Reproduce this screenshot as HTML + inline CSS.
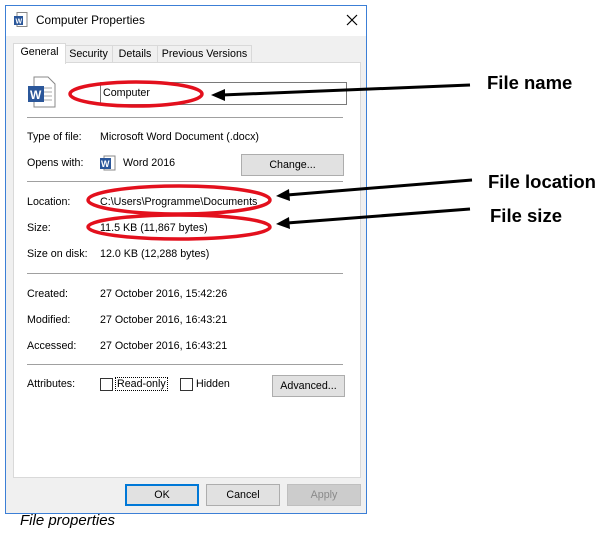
<!DOCTYPE html>
<html><head><style>
body{margin:0;width:614px;height:538px;background:#fff;font-family:"Liberation Sans",sans-serif;font-size:10.7px;color:#000;position:relative;overflow:hidden}
.a{position:absolute;white-space:nowrap}
.win{position:absolute;left:5px;top:5px;width:360px;height:507px;border:1px solid #3c7fd6;background:#f0f0f0}
.title{position:absolute;left:0;top:0;width:360px;height:30px;background:#fff}
.panel{position:absolute;left:7px;top:56px;width:346px;height:414px;background:#fff;border:1px solid #d9d9d9}
.tab{position:absolute;top:39px;height:17px;border:1px solid #d9d9d9;border-bottom:none;background:#f0f0f0;line-height:17px;text-align:center}
.sep{position:absolute;height:1px;background:#a0a0a0}
.btn{position:absolute;height:20px;border:1px solid #adadad;background:#e1e1e1;text-align:center;line-height:20px}
.cb{position:absolute;width:11px;height:11px;border:1px solid #333;background:#fff}
.lbl{font-weight:bold;font-size:18.5px}
</style></head><body>
<div class="win">
 <div class="title"></div>
 <div class="tab" style="left:58px;width:47px">Security</div>
 <div class="tab" style="left:106px;width:44px">Details</div>
 <div class="tab" style="left:151px;width:93px">Previous Versions</div>
 <div class="panel"></div>
 <div class="tab" style="left:7px;top:37px;height:20px;width:51px;background:#fff;z-index:2">General</div>
</div>
<svg class="a" style="left:14px;top:12px" width="14" height="16"><rect x="3" y="0.5" width="10" height="14" fill="#fff" stroke="#888"/><rect x="0" y="4" width="9" height="9" fill="#2b579a"/><text x="1.5" y="11.5" font-size="7" fill="#fff" font-family="Liberation Sans" font-weight="bold">W</text></svg>
<div class="a" style="left:36px;top:13px;font-size:11.8px">Computer Properties</div>
<svg class="a" style="left:346px;top:14px" width="12" height="12"><path d="M1 1L11 11M11 1L1 11" stroke="#000" stroke-width="1.2"/></svg>
<svg class="a" style="left:28px;top:76px" width="28" height="32"><path d="M6 1h14l7 7v23H6z" fill="#fff" stroke="#888"/><path d="M13 12h11M13 16h11M13 20h11M13 24h11" stroke="#aaa"/><rect x="0" y="10" width="16" height="16" fill="#2b579a"/><text x="2" y="23" font-size="12" fill="#fff" font-weight="bold" font-family="Liberation Sans">W</text></svg>
<div class="a" style="left:100px;top:82px;width:245px;height:21px;border:1px solid #7a7a7a;background:#fff"></div>
<div class="a" style="left:103px;top:87px">Computer</div>
<div class="sep" style="top:117px;left:27px;width:316px"></div>
<div class="a" style="left:27px;top:131px">Type of file:</div><div class="a" style="left:100px;top:131px">Microsoft Word Document (.docx)</div>
<div class="a" style="left:27px;top:157px">Opens with:</div>
<svg class="a" style="left:100px;top:155px" width="16" height="16"><rect x="4" y="1" width="11" height="14" fill="#fff" stroke="#888"/><rect x="0" y="3" width="11" height="11" fill="#2b579a"/><text x="1" y="12" font-size="9" fill="#fff" font-weight="bold" font-family="Liberation Sans">W</text></svg>
<div class="a" style="left:123px;top:157px">Word 2016</div>
<div class="btn" style="left:241px;top:154px;width:101px">Change...</div>
<div class="sep" style="top:181px;left:27px;width:316px"></div>
<div class="a" style="left:27px;top:196px">Location:</div><div class="a" style="left:100px;top:196px">C:\Users\Programme\Documents</div>
<div class="a" style="left:27px;top:222px">Size:</div><div class="a" style="left:100px;top:222px">11.5 KB (11,867 bytes)</div>
<div class="a" style="left:27px;top:248px">Size on disk:</div><div class="a" style="left:100px;top:248px">12.0 KB (12,288 bytes)</div>
<div class="sep" style="top:273px;left:27px;width:316px"></div>
<div class="a" style="left:27px;top:288px">Created:</div><div class="a" style="left:100px;top:288px">27 October 2016, 15:42:26</div>
<div class="a" style="left:27px;top:314px">Modified:</div><div class="a" style="left:100px;top:314px">27 October 2016, 16:43:21</div>
<div class="a" style="left:27px;top:340px">Accessed:</div><div class="a" style="left:100px;top:340px">27 October 2016, 16:43:21</div>
<div class="sep" style="top:364px;left:27px;width:316px"></div>
<div class="a" style="left:27px;top:378px">Attributes:</div>
<div class="cb" style="left:100px;top:378px"></div><div class="a" style="left:115px;top:377px;border:1px dotted #000;padding:0 1px">Read-only</div>
<div class="cb" style="left:180px;top:378px"></div><div class="a" style="left:196px;top:378px">Hidden</div>
<div class="btn" style="left:272px;top:375px;width:71px">Advanced...</div>
<div class="btn" style="left:125px;top:484px;width:70px;border:2px solid #0078d7;height:18px;line-height:18px">OK</div>
<div class="btn" style="left:206px;top:484px;width:72px">Cancel</div>
<div class="btn" style="left:287px;top:484px;width:72px;background:#ccc;border-color:#bfbfbf;color:#8a8a8a">Apply</div>
<div class="a" style="left:20px;top:512px;font-size:15px;font-style:italic">File properties</div>
<svg class="a" style="left:0;top:0" width="614" height="538">
<g fill="none" stroke="#e3101d" stroke-width="3.5">
<ellipse cx="136" cy="94" rx="66" ry="12"/>
<ellipse cx="179" cy="200" rx="91" ry="14"/>
<ellipse cx="179" cy="227" rx="91" ry="12"/>
</g>
<g stroke="#000" stroke-width="3">
<line x1="470" y1="85" x2="222" y2="95"/>
<line x1="472" y1="180" x2="287" y2="195"/>
<line x1="470" y1="209" x2="287" y2="223"/>
</g>
<g fill="#000">
<path d="M211 95l14-6v12z"/>
<path d="M276 196l13-7 1 12z"/>
<path d="M276 224l13-7 1 12z"/>
</g>
</svg>
<div class="a lbl" style="left:487px;top:72px">File name</div>
<div class="a lbl" style="left:488px;top:171px">File location</div>
<div class="a lbl" style="left:490px;top:205px">File size</div>
</body></html>
